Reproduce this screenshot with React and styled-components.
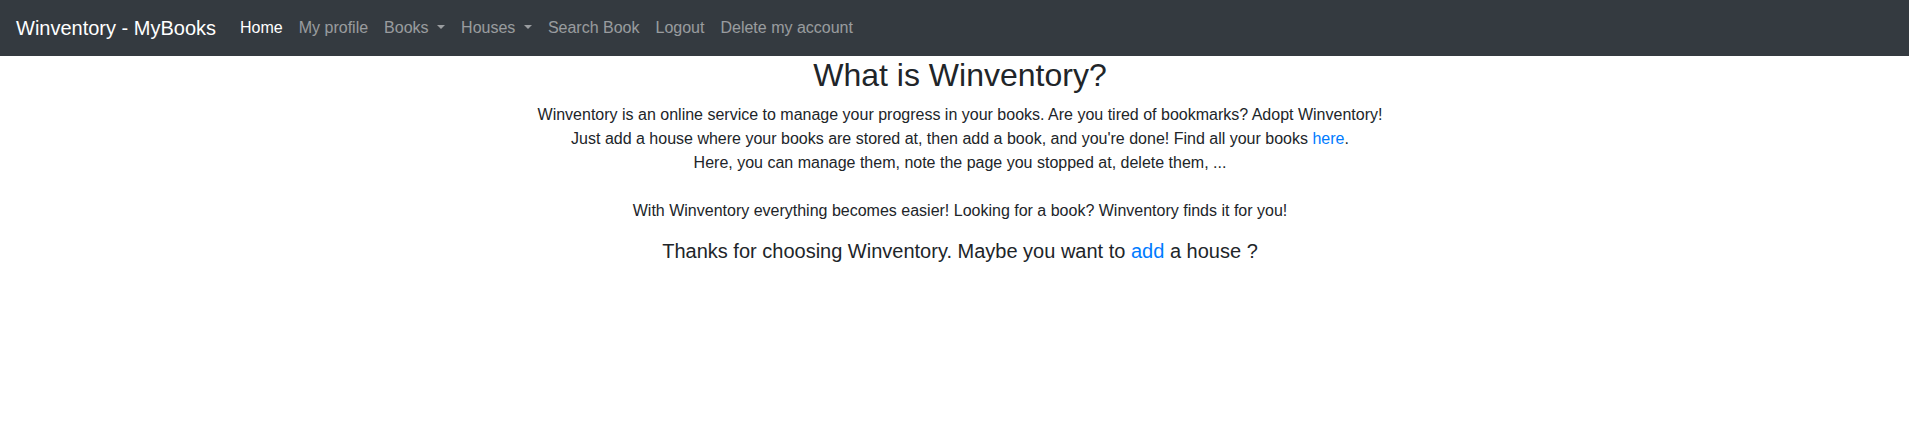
import React from 'react'
import styled, { createGlobalStyle } from 'styled-components'

const GlobalStyle = createGlobalStyle`
  *, *::before, *::after {
    box-sizing: border-box;
  }

  body {
    margin: 0;
    font-family: "Liberation Sans", Arial, sans-serif;
    font-size: 16px;
    line-height: 1.5;
    color: #212529;
    background-color: #fff;
  }
`

const Navbar = styled.nav`
  display: flex;
  align-items: center;
  padding: 8px 16px;
  background-color: #343a40;
`

const Brand = styled.a`
  display: inline-block;
  padding: 5px 0;
  margin-right: 16px;
  font-size: 20px;
  line-height: 1.5;
  color: #fff;
  text-decoration: none;
  white-space: nowrap;
`

const NavList = styled.ul`
  display: flex;
  list-style: none;
  margin: 0;
  padding: 0;
`

const NavLink = styled.a`
  display: block;
  padding: 8px;
  color: ${props => props.$active ? '#fff' : 'rgba(255, 255, 255, 0.5)'};
  text-decoration: none;
  white-space: pre;

  ${props => props.$dropdown && `
    &::after {
      display: inline-block;
      margin-left: 0.255em;
      vertical-align: 0.255em;
      content: "";
      border-top: 0.3em solid;
      border-right: 0.3em solid transparent;
      border-bottom: 0;
      border-left: 0.3em solid transparent;
    }
  `}
`

const Main = styled.main`
  padding-left: 11px;
  text-align: center;
`

const Title = styled.h2`
  margin: 0 0 9px;
  font-size: 32px;
  font-weight: 500;
  line-height: 1.2;
`

const Intro = styled.p`
  margin: 0 0 16px;
`

const Closing = styled.h5`
  margin: 6px 0 8px;
  font-size: 20px;
  font-weight: 500;
  line-height: 1.2;
`

const Link = styled.a`
  color: #007bff;
  text-decoration: none;
`

const links = [
  { label: 'Home', active: true },
  { label: 'My profile' },
  { label: 'Books', dropdown: true },
  { label: 'Houses', dropdown: true },
  { label: 'Search Book' },
  { label: 'Logout' },
  { label: 'Delete my account' },
]

const App = () => {
  return (
    <>
      <GlobalStyle />
      <Navbar>
        <Brand href="#">Winventory - MyBooks</Brand>
        <NavList>
          {links.map(link => (
            <li key={link.label}>
              <NavLink href="#" $active={link.active} $dropdown={link.dropdown}>
                {link.dropdown ? link.label + ' ' : link.label}
              </NavLink>
            </li>
          ))}
        </NavList>
      </Navbar>

      <Main>
        <Title>What is Winventory?</Title>
        <Intro>
          Winventory is an online service to manage your progress in your books. Are you tired of bookmarks? Adopt Winventory!<br />
          Just add a house where your books are stored at, then add a book, and you're done! Find all your books <Link href="#">here</Link>.<br />
          Here, you can manage them, note the page you stopped at, delete them, ...<br />
          <br />
          With Winventory everything becomes easier! Looking for a book? Winventory finds it for you!
        </Intro>
        <Closing>Thanks for choosing Winventory. Maybe you want to <Link href="#">add</Link> a house ?</Closing>
      </Main>
    </>
  )
}

export default App
